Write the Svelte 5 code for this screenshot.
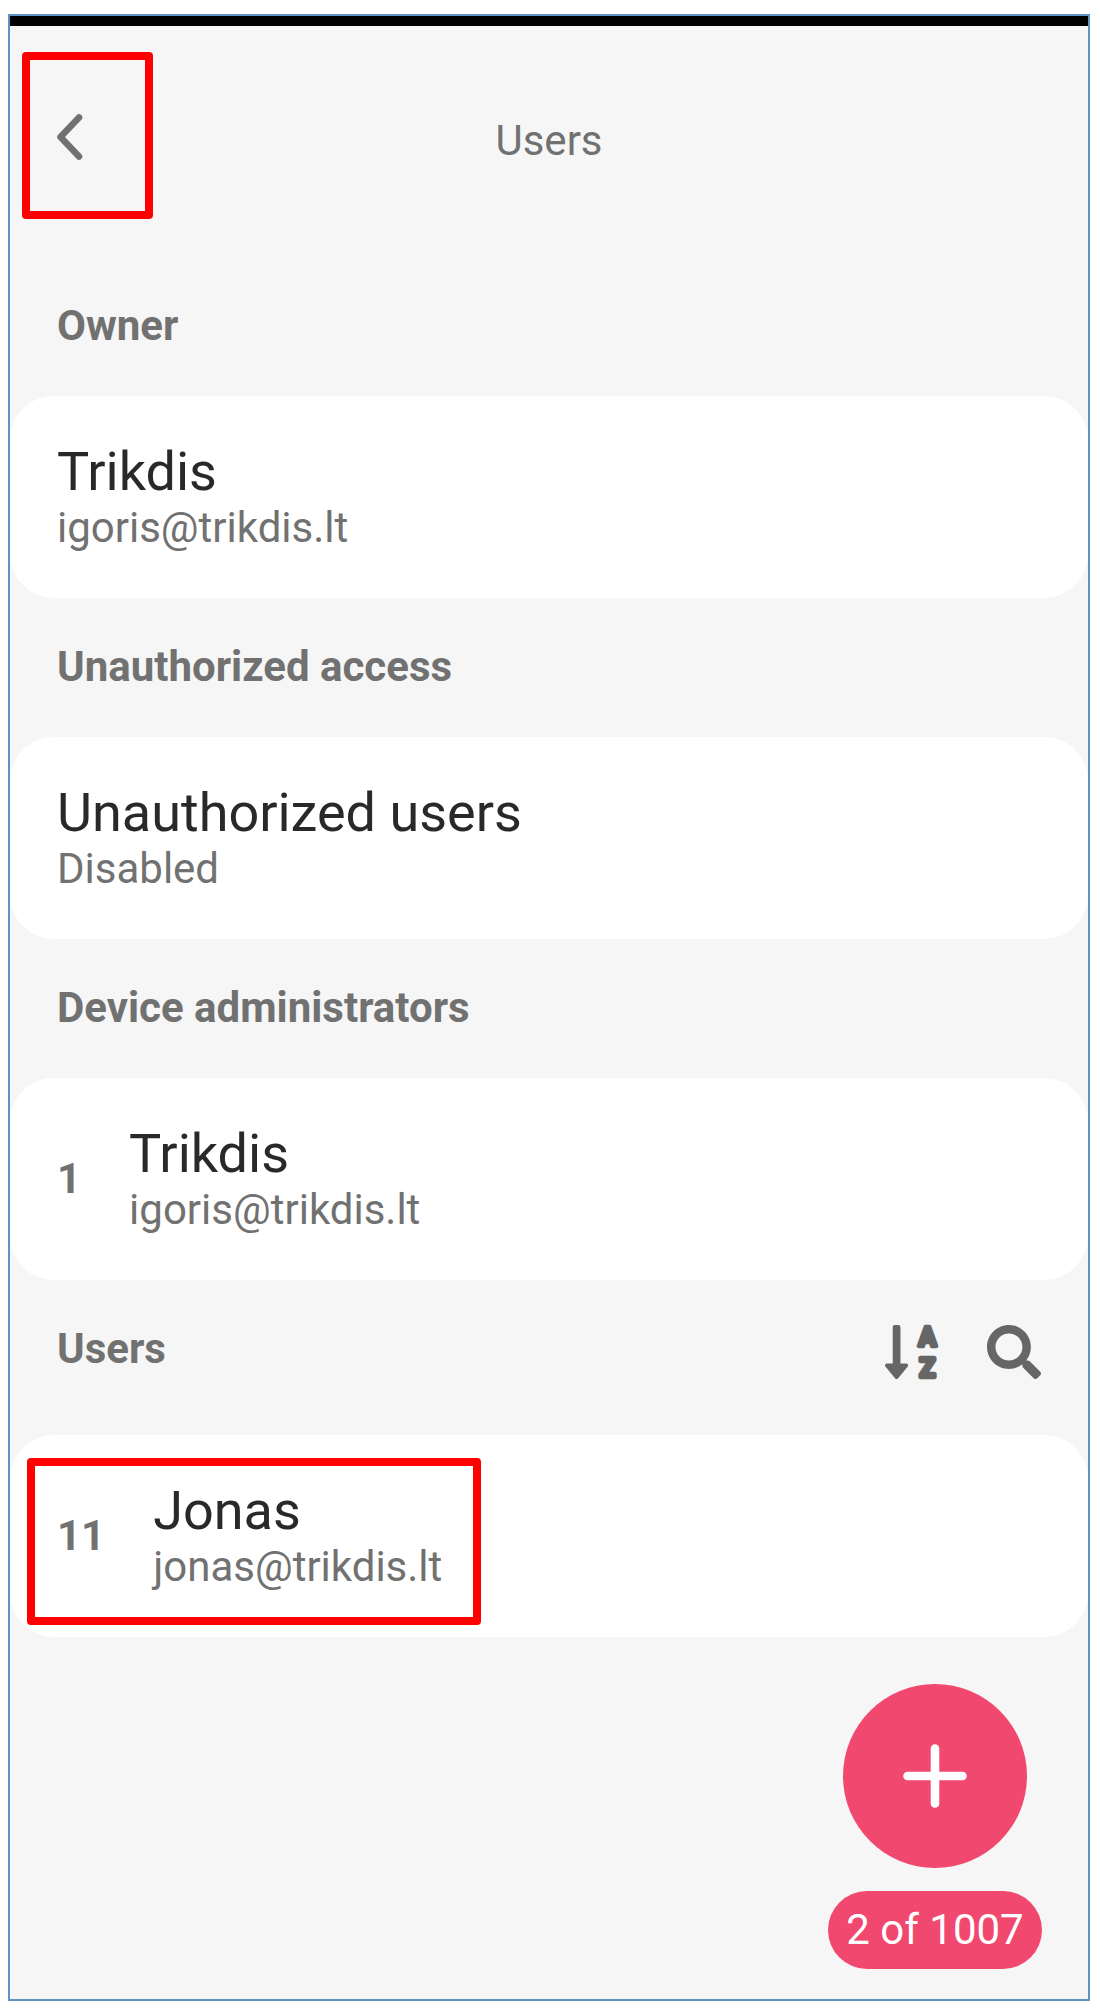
<script>
  const sections = [
    { title: 'Owner', items: [{ name: 'Trikdis', detail: 'igoris@trikdis.lt' }] },
    { title: 'Unauthorized access', items: [{ name: 'Unauthorized users', detail: 'Disabled' }] },
    { title: 'Device administrators', items: [{ id: '1', name: 'Trikdis', detail: 'igoris@trikdis.lt' }] },
    {
      title: 'Users',
      tools: true,
      items: [{ id: '11', name: 'Jonas', detail: 'jonas@trikdis.lt', marked: true }]
    }
  ];
</script>

<div class="screen">
  <div class="status"></div>
  <header>
    <button class="back" aria-label="Back">
      <svg width="30" height="50" viewBox="0 0 30 50">
        <path d="M24 6.5 L5.5 26 L24 45.5" />
      </svg>
    </button>
    <h1>Users</h1>
  </header>

  {#each sections as section}
    <div class="heading" class:tall={section.tools}>
      <h2>{section.title}</h2>
      {#if section.tools}
        <div class="tools">
          <svg class="sort" width="55" height="54" viewBox="0 32 456 448">
            <path d="M176 352h-48V48a16 16 0 0 0-16-16H80a16 16 0 0 0-16 16v304H16c-14.19 0-21.36 17.24-11.29 27.31l80 96a16 16 0 0 0 22.62 0l80-96C197.35 369.26 190.22 352 176 352z" />
            <text x="352" y="206" text-anchor="middle">A</text>
            <text x="352" y="462" text-anchor="middle">Z</text>
          </svg>
          <svg width="54" height="54" viewBox="0 0 512 512">
            <path d="M505 442.7L405.3 343c-4.5-4.5-10.6-7-17-7H372c27.6-35.3 44-79.7 44-128C416 93.1 322.9 0 208 0S0 93.1 0 208s93.1 208 208 208c48.3 0 92.7-16.4 128-44v16.3c0 6.4 2.5 12.5 7 17l99.7 99.7c9.4 9.4 24.6 9.4 33.9 0l28.3-28.3c9.4-9.4 9.4-24.6.1-34zM208 336c-70.7 0-128-57.2-128-128 0-70.7 57.2-128 128-128 70.7 0 128 57.2 128 128 0 70.7-57.2 128-128 128z" />
          </svg>
        </div>
      {/if}
    </div>
    {#each section.items as item}
      <div class="card">
        {#if item.id}<span class="num">{item.id}</span>{/if}
        <div class="info">
          <div class="name">{item.name}</div>
          <div class="detail">{item.detail}</div>
        </div>
        {#if item.marked}<div class="mark"></div>{/if}
      </div>
    {/each}
  {/each}

  <footer>
    <button class="add" aria-label="Add user">
      <svg width="64" height="64" viewBox="0 0 64 64">
        <path d="M32 4.5V59.5M4.5 32H59.5" />
      </svg>
    </button>
    <div class="count">2 of 1007</div>
  </footer>
</div>

<style>
  :global(body) {
    background: #fff;
  }
  .screen {
    box-sizing: border-box;
    width: 1082px;
    height: 1987px;
    margin: 14px 0 0 8px;
    border: 2px solid #5f93c4;
    background: #f6f6f6;
    font-family: Roboto, sans-serif;
    color: #717171;
    font-size: 42px;
    line-height: 48px;
  }
  .status {
    height: 10px;
    background: #000;
  }
  header {
    height: 231px;
    display: grid;
    grid-template-columns: 143px 1fr 143px;
    align-items: start;
  }
  button {
    padding: 0;
    font: inherit;
  }
  .back {
    box-sizing: border-box;
    width: 131px;
    height: 167px;
    margin: 26px 0 0 12px;
    padding-left: 25px;
    border: 8px solid #f00;
    border-radius: 4px;
    background: none;
    display: flex;
    align-items: center;
  }
  .back svg {
    fill: none;
    stroke: #717171;
    stroke-width: 6.6;
    stroke-linecap: round;
    stroke-linejoin: round;
  }
  h1 {
    margin: 91px 0 0;
    font-size: 42px;
    font-weight: 400;
    text-align: center;
  }
  .heading {
    box-sizing: border-box;
    height: 139px;
    padding: 45px 47px 0;
    display: flex;
    justify-content: space-between;
    align-items: flex-start;
  }
  .heading.tall {
    height: 155px;
  }
  h2 {
    margin: 0;
    font-size: 42px;
    font-weight: 700;
  }
  .tools {
    display: flex;
    gap: 47px;
    fill: #666;
  }
  .sort {
    overflow: visible;
  }
  .sort text {
    font: 700 215px Roboto, sans-serif;
    stroke: #666;
    stroke-width: 36px;
    stroke-linejoin: round;
  }
  .card {
    box-sizing: border-box;
    position: relative;
    height: 202px;
    padding: 0 47px;
    border-radius: 44px;
    background: #fff;
    display: flex;
    align-items: center;
    gap: 48px;
  }
  .num {
    font-weight: 700;
  }
  .name {
    margin-bottom: 2px;
    font-size: 54px;
    line-height: 60px;
    color: #27292a;
  }
  .mark {
    position: absolute;
    box-sizing: border-box;
    left: 17px;
    top: 23px;
    width: 454px;
    height: 167px;
    border: 8px solid #f00;
    border-radius: 4px;
  }
  footer {
    width: 214px;
    margin: 47px 0 0 818px;
    display: flex;
    flex-direction: column;
    align-items: center;
    gap: 23px;
  }
  .add {
    width: 184px;
    height: 184px;
    border: 0;
    border-radius: 50%;
    background: #f1486f;
    display: grid;
    place-items: center;
  }
  .add path {
    stroke: #fff;
    stroke-width: 8.6;
    stroke-linecap: round;
  }
  .count {
    width: 214px;
    border-radius: 39px;
    background: #f1486f;
    color: #fff;
    line-height: 78px;
    text-align: center;
  }
</style>
